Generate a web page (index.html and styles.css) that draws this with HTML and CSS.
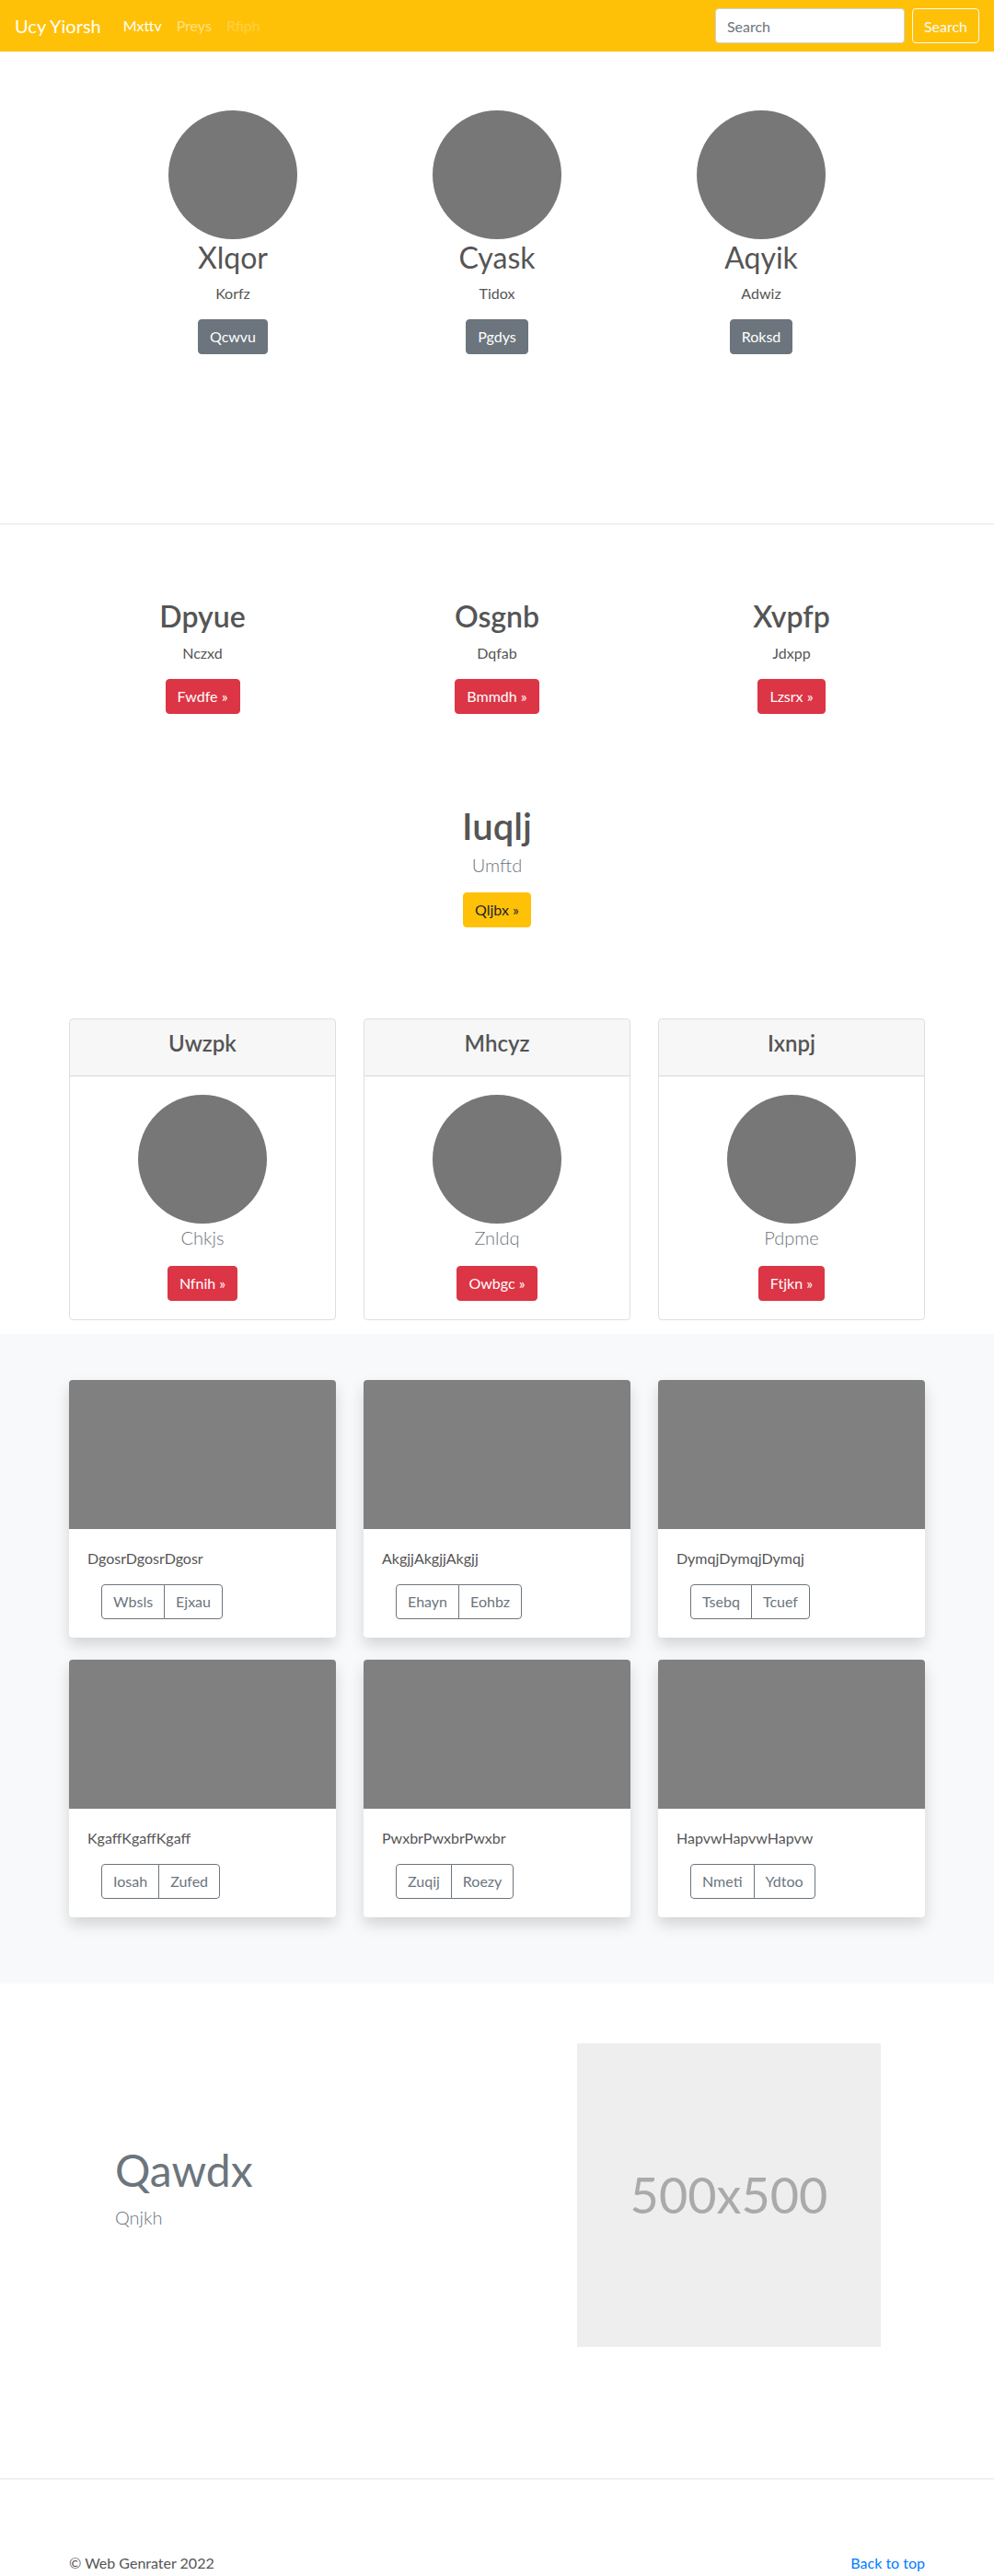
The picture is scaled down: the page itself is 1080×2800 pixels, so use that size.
FILE: index.html
```html
<!DOCTYPE html>
<html lang="en">
<head>
<meta charset="utf-8">
<title>Ucy Yiorsh</title>
<link rel="stylesheet" href="styles.css">
</head>
<body>
<nav class="navbar">
  <div class="nav-left">
    <a class="brand" href="#">Ucy Yiorsh</a>
    <ul class="nav-links">
      <li><a class="nav-link active" href="#">Mxttv</a></li>
      <li><a class="nav-link" href="#">Preys</a></li>
      <li><a class="nav-link disabled" href="#">Rfiph</a></li>
    </ul>
  </div>
  <form class="search">
    <input class="search-input" type="text" placeholder="Search">
    <button class="search-btn" type="button">Search</button>
  </form>
</nav>

<section class="marketing">
  <div class="marketing-row">
    <div class="marketing-col">
      <div class="circle"></div>
      <h2 class="m-title">Xlqor</h2>
      <p class="m-text">Korfz</p>
      <a class="btn btn-secondary" href="#">Qcwvu</a>
    </div>
    <div class="marketing-col">
      <div class="circle"></div>
      <h2 class="m-title">Cyask</h2>
      <p class="m-text">Tidox</p>
      <a class="btn btn-secondary" href="#">Pgdys</a>
    </div>
    <div class="marketing-col">
      <div class="circle"></div>
      <h2 class="m-title">Aqyik</h2>
      <p class="m-text">Adwiz</p>
      <a class="btn btn-secondary" href="#">Roksd</a>
    </div>
  </div>
</section>

<hr class="divider">

<section class="features">
  <div class="feature">
    <h2 class="f-title">Dpyue</h2>
    <p class="f-text">Nczxd</p>
    <a class="btn btn-danger" href="#">Fwdfe »</a>
  </div>
  <div class="feature">
    <h2 class="f-title">Osgnb</h2>
    <p class="f-text">Dqfab</p>
    <a class="btn btn-danger" href="#">Bmmdh »</a>
  </div>
  <div class="feature">
    <h2 class="f-title">Xvpfp</h2>
    <p class="f-text">Jdxpp</p>
    <a class="btn btn-danger" href="#">Lzsrx »</a>
  </div>
</section>

<section class="hero">
  <h1 class="hero-title">Iuqlj</h1>
  <p class="lead muted hero-lead">Umftd</p>
  <a class="btn btn-warning" href="#">Qljbx »</a>
</section>

<section class="pricing">
  <div class="p-card">
    <div class="p-header"><h4 class="p-title">Uwzpk</h4></div>
    <div class="p-body">
      <div class="circle"></div>
      <p class="lead muted p-lead">Chkjs</p>
      <a class="btn btn-danger" href="#">Nfnih »</a>
    </div>
  </div>
  <div class="p-card">
    <div class="p-header"><h4 class="p-title">Mhcyz</h4></div>
    <div class="p-body">
      <div class="circle"></div>
      <p class="lead muted p-lead">Znldq</p>
      <a class="btn btn-danger" href="#">Owbgc »</a>
    </div>
  </div>
  <div class="p-card">
    <div class="p-header"><h4 class="p-title">Ixnpj</h4></div>
    <div class="p-body">
      <div class="circle"></div>
      <p class="lead muted p-lead">Pdpme</p>
      <a class="btn btn-danger" href="#">Ftjkn »</a>
    </div>
  </div>
</section>

<section class="album">
  <div class="album-grid">
    <div class="a-card">
      <div class="a-img"></div>
      <div class="a-body">
        <p class="a-text">DgosrDgosrDgosr</p>
        <div class="btn-group"><a class="btn btn-outline" href="#">Wbsls</a><a class="btn btn-outline" href="#">Ejxau</a></div>
      </div>
    </div>
    <div class="a-card">
      <div class="a-img"></div>
      <div class="a-body">
        <p class="a-text">AkgjjAkgjjAkgjj</p>
        <div class="btn-group"><a class="btn btn-outline" href="#">Ehayn</a><a class="btn btn-outline" href="#">Eohbz</a></div>
      </div>
    </div>
    <div class="a-card">
      <div class="a-img"></div>
      <div class="a-body">
        <p class="a-text">DymqjDymqjDymqj</p>
        <div class="btn-group"><a class="btn btn-outline" href="#">Tsebq</a><a class="btn btn-outline" href="#">Tcuef</a></div>
      </div>
    </div>
    <div class="a-card">
      <div class="a-img"></div>
      <div class="a-body">
        <p class="a-text">KgaffKgaffKgaff</p>
        <div class="btn-group"><a class="btn btn-outline" href="#">Iosah</a><a class="btn btn-outline" href="#">Zufed</a></div>
      </div>
    </div>
    <div class="a-card">
      <div class="a-img"></div>
      <div class="a-body">
        <p class="a-text">PwxbrPwxbrPwxbr</p>
        <div class="btn-group"><a class="btn btn-outline" href="#">Zuqij</a><a class="btn btn-outline" href="#">Roezy</a></div>
      </div>
    </div>
    <div class="a-card">
      <div class="a-img"></div>
      <div class="a-body">
        <p class="a-text">HapvwHapvwHapvw</p>
        <div class="btn-group"><a class="btn btn-outline" href="#">Nmeti</a><a class="btn btn-outline" href="#">Ydtoo</a></div>
      </div>
    </div>
  </div>
</section>

<section class="showcase">
  <div class="showcase-text">
    <h2 class="s-title">Qawdx</h2>
    <p class="lead muted s-lead">Qnjkh</p>
  </div>
  <div class="placeholder">500x500</div>
</section>

<hr class="divider">

<footer class="footer">
  <p class="copy">© Web Genrater 2022</p>
  <a class="back" href="#">Back to top</a>
</footer>
</body>
</html>
```

FILE: styles.css
```css
* { box-sizing: border-box; }

html, body {
  margin: 0;
  padding: 0;
}

body {
  font-family: "Segoe UI", Lato, "Liberation Sans", sans-serif;
  font-size: 16px;
  line-height: 1.5;
  color: #555555;
  background: #ffffff;
}

a { text-decoration: none; }

p { margin: 0 0 16px; }

h1, h2, h4 { margin: 0 0 8px; line-height: 1.2; }

/* ---------- navbar ---------- */
.navbar {
  height: 56px;
  padding: 8px 16px;
  background: #ffc107;
  display: flex;
  align-items: center;
  justify-content: space-between;
}

.nav-left {
  display: flex;
  align-items: center;
}

.brand {
  font-size: 20px;
  line-height: 30px;
  padding: 5px 0;
  margin-right: 16px;
  color: #ffffff;
}

.nav-links {
  display: flex;
  list-style: none;
  margin: 0;
  padding: 0;
}

.nav-link {
  display: block;
  padding: 8px;
  color: rgba(255, 255, 255, 0.5);
}

.nav-link.active { color: #ffffff; }
.nav-link.disabled { color: rgba(255, 255, 255, 0.25); }

.search {
  display: flex;
  align-items: center;
}

.search-input {
  width: 206px;
  height: 38px;
  padding: 6px 12px;
  margin-right: 8px;
  font-family: inherit;
  font-size: 16px;
  color: #495057;
  background: #ffffff;
  border: 1px solid #ced4da;
  border-radius: 4px;
}

.search-input::placeholder { color: #6c757d; }

.search-btn {
  height: 38px;
  padding: 6px 12px;
  font-family: inherit;
  font-size: 16px;
  color: #f8f9fa;
  background: transparent;
  border: 1px solid #f8f9fa;
  border-radius: 4px;
}

/* ---------- buttons ---------- */
.btn {
  display: inline-block;
  padding: 6px 12px;
  font-size: 16px;
  line-height: 24px;
  border: 1px solid transparent;
  border-radius: 4px;
  text-align: center;
}

.btn-secondary { background: #6c757d; border-color: #6c757d; color: #ffffff; }
.btn-danger { background: #dc3545; border-color: #dc3545; color: #ffffff; }
.btn-warning { background: #ffc107; border-color: #ffc107; color: #212529; }
.btn-outline { background: #ffffff; border-color: #6c757d; color: #6c757d; }

.circle {
  width: 140px;
  height: 140px;
  border-radius: 50%;
  background: #777777;
  margin: 0 auto;
}

.lead { font-size: 20px; font-weight: 300; line-height: 30px; }
.muted { color: #6c757d; }

/* ---------- marketing ---------- */
.marketing {
  padding: 64px 0 184px;
}

.marketing-row {
  width: 861px;
  margin: 0 auto;
  display: grid;
  grid-template-columns: repeat(3, 1fr);
}

.marketing-col { text-align: center; }

.m-title {
  font-size: 32px;
  font-weight: 400;
  color: #555555;
  margin-top: 1px;
}

.divider {
  margin: 0;
  border: 0;
  border-top: 1px solid rgba(0, 0, 0, 0.1);
}

/* ---------- features ---------- */
.features {
  width: 960px;
  margin: 0 auto;
  padding-top: 81px;
  display: grid;
  grid-template-columns: repeat(3, 1fr);
}

.feature { text-align: center; }

.f-title {
  font-size: 32px;
  font-weight: 600;
  color: #555555;
}

/* ---------- hero ---------- */
.hero {
  text-align: center;
  padding-top: 98px;
}

.hero-title {
  font-size: 40px;
  font-weight: 600;
  color: #555555;
  margin-bottom: 3px;
}

.hero-lead { margin-bottom: 15px; }

/* ---------- pricing ---------- */
.pricing {
  width: 930px;
  margin: 0 auto;
  padding: 99px 0 15px;
  display: grid;
  grid-template-columns: repeat(3, 1fr);
  column-gap: 30px;
}

.p-card {
  border: 1px solid rgba(0, 0, 0, 0.125);
  border-radius: 4px;
  text-align: center;
  overflow: hidden;
}

.p-header {
  padding: 12px 20px;
  background: rgba(0, 0, 0, 0.03);
  border-bottom: 1px solid rgba(0, 0, 0, 0.125);
}

.p-title {
  font-size: 24px;
  font-weight: 600;
  color: #555555;
}

.p-body { padding: 20px; }

/* ---------- album ---------- */
.album {
  background: #f8f9fa;
  padding: 50px 0 72px;
}

.album-grid {
  width: 930px;
  margin: 0 auto;
  display: grid;
  grid-template-columns: repeat(3, 1fr);
  column-gap: 30px;
  row-gap: 24px;
}

.a-card {
  background: #ffffff;
  border-radius: 4px;
  box-shadow: 0 8px 16px rgba(0, 0, 0, 0.15);
  overflow: hidden;
}

.a-img {
  height: 162px;
  background: #808080;
}

.a-body { padding: 20px; }

.a-text { color: #555555; }

.btn-group {
  display: inline-flex;
  margin-left: 15px;
}

.btn-group .btn:first-child { border-top-right-radius: 0; border-bottom-right-radius: 0; }
.btn-group .btn + .btn { margin-left: -1px; border-top-left-radius: 0; border-bottom-left-radius: 0; }

/* ---------- showcase ---------- */
.showcase {
  width: 960px;
  margin: 0 auto;
  padding: 65px 0 143px;
  display: flex;
  align-items: center;
}

.showcase-text {
  flex: 1;
  padding-left: 65px;
}

.s-title {
  font-size: 48px;
  font-weight: 400;
  color: #6c757d;
}

.placeholder {
  width: 330px;
  height: 330px;
  margin-right: 63px;
  background: #eeeeee;
  color: #aaaaaa;
  font-size: 54px;
  display: flex;
  align-items: center;
  justify-content: center;
}

/* ---------- footer ---------- */
.footer {
  width: 930px;
  margin: 0 auto;
  padding-top: 79px;
  display: flex;
  justify-content: space-between;
}

.copy { margin: 0; color: #555555; }
.back { color: #007bff; }
```
